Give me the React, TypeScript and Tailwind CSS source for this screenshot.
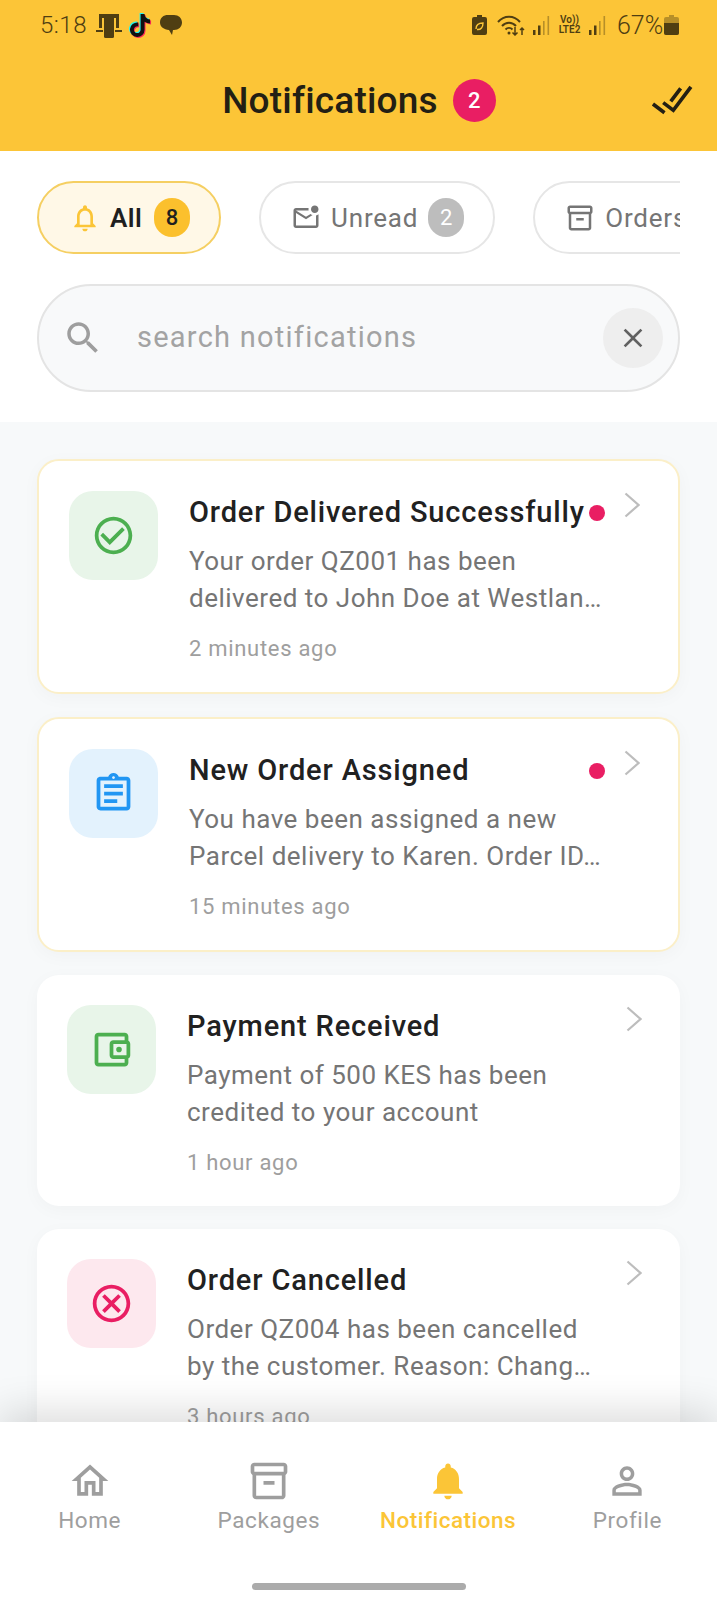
import type { ReactNode } from 'react'
import { FaTiktok } from 'react-icons/fa'

const PATHS = {
  bell: 'M12 22c1.1 0 2-.9 2-2h-4c0 1.1.9 2 2 2zm6-6v-5c0-3.07-1.63-5.64-4.5-6.32V4c0-.83-.67-1.5-1.5-1.5s-1.5.67-1.5 1.5v.68C7.64 5.36 6 7.92 6 11v5l-2 2v1h16v-1l-2-2zm-2 1H8v-6c0-2.48 1.51-4.5 4-4.5s4 2.02 4 4.5v6z',
  bellFilled: 'M12 22c1.1 0 2-.9 2-2h-4c0 1.1.89 2 2 2zm6-6v-5c0-3.07-1.64-5.64-4.5-6.32V4c0-.83-.67-1.5-1.5-1.5s-1.5.67-1.5 1.5v.68C7.63 5.36 6 7.92 6 11v5l-2 2v1h16v-1l-2-2z',
  unread: 'M22 8.98V18c0 1.1-.9 2-2 2H4c-1.1 0-2-.9-2-2V6c0-1.1.9-2 2-2h10.1c-.06.32-.1.66-.1 1s.04.68.1 1H4l8 5 3.67-2.29c.47.43 1.02.76 1.63.98L12 13 4 8v10h16V9.9c.74-.15 1.42-.48 2-.92zM16 5c0 1.66 1.34 3 3 3s3-1.34 3-3-1.34-3-3-3-3 1.34-3 3z',
  box: 'M20 2H4c-1 0-2 .9-2 2v3.01c0 .72.43 1.34 1 1.69V20c0 1.1 1.1 2 2 2h14c.9 0 2-.9 2-2V8.7c.57-.35 1-.97 1-1.69V4c0-1.1-1-2-2-2zm-1 18H5V9h14v11zm1-13H4V4h16v3zM9 12h6v2H9z',
  search: 'M15.5 14h-.79l-.28-.27C15.41 12.59 16 11.11 16 9.5 16 5.91 13.09 3 9.5 3S3 5.91 3 9.5 5.91 16 9.5 16c1.61 0 3.09-.59 4.23-1.57l.27.28v.79l5 4.99L20.49 19l-4.99-5zm-6 0C7.01 14 5 11.99 5 9.5S7.01 5 9.5 5 14 7.01 14 9.5 11.99 14 9.5 14z',
  close: 'M19 6.41L17.59 5 12 10.59 6.41 5 5 6.41 10.59 12 5 17.59 6.41 19 12 13.41 17.59 19 19 17.59 13.41 12z',
  doneAll: 'M18 7l-1.41-1.41-6.34 6.34 1.41 1.41L18 7zm4.24-1.41L11.66 16.17 7.48 12l-1.41 1.41L11.66 19l12-12-1.42-1.41zM.41 13.41L6 19l1.41-1.41L1.83 12 .41 13.41z',
  check: 'M16.59 7.58L10 14.17l-3.59-3.58L5 12l5 5 8-8zM12 2C6.48 2 2 6.48 2 12s4.48 10 10 10 10-4.48 10-10S17.52 2 12 2zm0 18c-4.42 0-8-3.58-8-8s3.58-8 8-8 8 3.58 8 8-3.58 8-8 8z',
  assignment: 'M7 15h7v2H7zm0-4h10v2H7zm0-4h10v2H7zm12-4h-4.18C14.4 1.84 13.3 1 12 1c-1.3 0-2.4.84-2.82 2H5c-.14 0-.27.01-.4.04-.39.08-.74.28-1.01.55-.18.18-.33.4-.43.64-.1.23-.16.49-.16.77v14c0 .27.06.54.16.78s.25.45.43.64c.27.27.62.47 1.01.55.13.02.26.03.4.03h14c1.1 0 2-.9 2-2V5c0-1.1-.9-2-2-2zm-7-.25c.41 0 .75.34.75.75s-.34.75-.75.75-.75-.34-.75-.75.34-.75.75-.75zM19 19H5V5h14v14z',
  wallet: 'M21 7.28V5c0-1.1-.9-2-2-2H5c-1.11 0-2 .9-2 2v14c0 1.1.89 2 2 2h14c1.1 0 2-.9 2-2v-2.28c.59-.35 1-.98 1-1.72V9c0-.74-.41-1.37-1-1.72zM20 9v6h-7V9h7zM5 19V5h14v2h-6c-1.1 0-2 .9-2 2v6c0 1.1.9 2 2 2h6v2H5zM16 10.5a1.5 1.5 0 1 0 0 3 1.5 1.5 0 0 0 0-3z',
  cancel: 'M12 2C6.47 2 2 6.47 2 12s4.47 10 10 10 10-4.47 10-10S17.53 2 12 2zm0 18c-4.41 0-8-3.59-8-8s3.59-8 8-8 8 3.59 8 8-3.59 8-8 8zm3.59-13L12 10.59 8.41 7 7 8.41 10.59 12 7 15.59 8.41 17 12 13.41 15.59 17 17 15.59 13.41 12 17 8.41z',
  home: 'M12 5.69l5 4.5V18h-2v-6H9v6H7v-7.81l5-4.5M12 3L2 12h3v8h6v-6h2v6h6v-8h3L12 3z',
  person: 'M12 5.9c1.16 0 2.1.94 2.1 2.1s-.94 2.1-2.1 2.1S9.9 9.16 9.9 8s.94-2.1 2.1-2.1m0 9c2.97 0 6.1 1.46 6.1 2.1v1.1H5.9V17c0-.64 3.13-2.1 6.1-2.1M12 4C9.79 4 8 5.79 8 8s1.79 4 4 4 4-1.79 4-4-1.79-4-4-4zm0 9c-2.67 0-8 1.34-8 4v3h16v-3c0-2.66-5.33-4-8-4z'
}

function Icon({ d, className }: { d: string; className: string }): JSX.Element {
  return (
    <svg viewBox="0 0 24 24" fill="currentColor" className={className}>
      <path d={d} />
    </svg>
  )
}

function Signal({ className }: { className: string }): JSX.Element {
  return (
    <svg viewBox="0 0 17 19" className={className} fill="currentColor">
      <rect x="0" y="14" width="2.5" height="5" />
      <rect x="5" y="9.5" width="2.5" height="9.5" />
      <rect x="10" y="5" width="1.6" height="14" opacity="0.4" />
      <rect x="14.5" y="0" width="1.6" height="19" opacity="0.4" />
    </svg>
  )
}

function StatusBar(): JSX.Element {
  return (
    <div className="flex h-[50px] items-center justify-between pl-[40px] pr-[38px] text-[#4f3e12]">
      <div className="flex items-center">
        <span className="w-[56px] text-[24px] font-light leading-none tracking-[0.5px]">5:18</span>
        <svg viewBox="0 0 26 25" className="h-[25px] w-[26px]" fill="currentColor">
          <path d="M3 1h20v14h-3V5H6v10H3z" />
          <rect x="8" y="3" width="10" height="22" rx="1.5" />
          <rect x="0" y="17" width="7" height="2" />
          <rect x="19" y="17" width="7" height="2" />
        </svg>
        <FaTiktok className="ml-[7px] h-[23px] w-[22px] text-[#111] [filter:drop-shadow(-1px_-1px_0_#25f4ee)_drop-shadow(1px_1px_0_#fe2c55)]" />
        <svg viewBox="0 0 22 22" className="ml-[9px] h-[22px] w-[22px]" fill="currentColor">
          <path d="M8 1h6c4.5 0 8 3 8 7.5S18.5 16 14 16h-1l-1 5-3-5C4 15.500 0 13 0 8.500 0 3.500 3.500 1 8 1z" />
        </svg>
      </div>
      <div className="flex items-center">
        <svg viewBox="0 0 15 20" className="h-[20px] w-[15px]" fill="currentColor">
          <path d="M5 0h5v2h3a2 2 0 0 1 2 2v14a2 2 0 0 1-2 2H2a2 2 0 0 1-2-2V4a2 2 0 0 1 2-2h3z" />
          <path d="M4 14c0-4 3-6 7-6 0 4-2 7-6 6.500" fill="none" stroke="#fcc537" strokeWidth="1.400" />
        </svg>
        <svg viewBox="0 0 28 21" className="ml-[10px] h-[21px] w-[28px]" fill="none" stroke="currentColor" strokeWidth="2">
          <path d="M1 7c6-7 16-7 22 0M5 11c4-4.500 10-4.500 14 0M8.500 14.500c2-2 5-2 7 0" />
          <circle cx="12" cy="18" r="1.500" fill="currentColor" stroke="none" />
          <path d="M18 12v8M15.500 17.500l2.500 2.500 2.500-2.500M25 20v-7M23 15l2-2 2 2" strokeWidth="1.500" />
        </svg>
        <Signal className="ml-[8px] h-[19px] w-[17px]" />
        <div className="ml-[7px] flex w-[25px] flex-col items-center text-[10px] font-semibold leading-[10px]">
          <span>Vo))</span>
          <span>LTE2</span>
        </div>
        <Signal className="ml-[7px] h-[19px] w-[17px]" />
        <span className="ml-[11px] w-[44px] whitespace-nowrap text-[25px] font-light leading-none">67%</span>
        <svg viewBox="0 0 15 20" className="ml-[3px] h-[20px] w-[15px]" fill="currentColor">
          <path d="M5 0h5v2h3a2 2 0 0 1 2 2v14a2 2 0 0 1-2 2H2a2 2 0 0 1-2-2V4a2 2 0 0 1 2-2h3z" opacity="0.4" />
          <path d="M0 8h15v10a2 2 0 0 1-2 2H2a2 2 0 0 1-2-2z" />
        </svg>
      </div>
    </div>
  )
}

function Chip({
  icon,
  label,
  count,
  active,
  className
}: {
  icon?: ReactNode
  label: string
  count?: string
  active?: boolean
  className: string
}): JSX.Element {
  return (
    <div
      className={[
        'flex h-[73px] shrink-0 items-center rounded-full border-2',
        active ? 'border-[#f5cf62] bg-[#fff8e7]' : 'border-[#e6e6e6] bg-white',
        className
      ].join(' ')}
    >
      {icon}
      <span
        className={[
          'text-[26px] leading-none',
          active ? 'font-semibold tracking-[0.4px] text-[#1f1f1f]' : 'font-[450] tracking-[0.8px] text-[#757575]'
        ].join(' ')}
      >
        {label}
      </span>
      {count && (
        <span
          className={[
            'flex h-[39px] w-[36px] items-center justify-center rounded-full text-[22px]',
            active ? 'ml-[12px] bg-[#fbc02d] font-medium text-[#1f1f1f]' : 'ml-[10px] bg-[#bdbdbd] text-white'
          ].join(' ')}
        >
          {count}
        </span>
      )}
    </div>
  )
}

type Note = {
  icon: string
  iconClass: string
  title: string
  lines: [string, string]
  time: string
  unread?: boolean
}

const NOTES: Note[] = [
  {
    icon: PATHS.check,
    iconClass: 'bg-[#e8f5e9] text-[#4caf50]',
    title: 'Order Delivered Successfully',
    lines: ['Your order QZ001 has been', 'delivered to John Doe at Westlan…'],
    time: '2 minutes ago',
    unread: true
  },
  {
    icon: PATHS.assignment,
    iconClass: 'bg-[#e3f2fd] text-[#2196f3]',
    title: 'New Order Assigned',
    lines: ['You have been assigned a new', 'Parcel delivery to Karen. Order ID…'],
    time: '15 minutes ago',
    unread: true
  },
  {
    icon: PATHS.wallet,
    iconClass: 'bg-[#e8f5e9] text-[#4caf50]',
    title: 'Payment Received',
    lines: ['Payment of 500 KES has been', 'credited to your account'],
    time: '1 hour ago'
  },
  {
    icon: PATHS.cancel,
    iconClass: 'bg-[#fde8ee] text-[#e91e63]',
    title: 'Order Cancelled',
    lines: ['Order QZ004 has been cancelled', 'by the customer. Reason: Chang…'],
    time: '3 hours ago'
  }
]

function NoteCard({ note }: { note: Note }): JSX.Element {
  return (
    <div
      className={[
        'flex shrink-0 rounded-[22px] bg-white px-[30px] pb-[29px] pt-[30px] shadow-[0_4px_18px_rgba(0,0,0,0.03)]',
        note.unread ? 'border-2 border-[#fbefc8]' : ''
      ].join(' ')}
    >
      <div className={`flex h-[89px] w-[89px] shrink-0 items-center justify-center rounded-[24px] ${note.iconClass}`}>
        <Icon d={note.icon} className="h-[45px] w-[45px]" />
      </div>
      <div className="ml-[31px] min-w-0 flex-1">
        <div className="flex h-[43px] items-center">
          <span className="min-w-0 flex-1 whitespace-nowrap text-[29px] font-[550] tracking-[0.85px] text-[#212121]">
            {note.title}
          </span>
          {note.unread && <span className="h-[16px] w-[16px] shrink-0 rounded-full bg-[#e91e63]" />}
        </div>
        <div className="mt-[9px] text-[26px] leading-[37px] tracking-[0.5px] text-[#757575]">
          {note.lines.map((l) => (
            <div key={l} className="whitespace-nowrap">
              {l}
            </div>
          ))}
        </div>
        <div className="mt-[18px] text-[22px] leading-[28px] tracking-[0.7px] text-[#9e9e9e]">{note.time}</div>
      </div>
      <div className="ml-[19px] w-[24px] shrink-0 pt-[1px]">
        <svg viewBox="0 0 16 26" className="h-[26px] w-[16px]" fill="none" stroke="#bdbdbd" strokeWidth="2.200">
          <path d="M1.500 1.500L14.500 13L1.500 24.500" />
        </svg>
      </div>
    </div>
  )
}

function NavItem({ d, label, active, iconClass }: { d: string; label: string; active?: boolean; iconClass: string }): JSX.Element {
  return (
    <div className={`flex flex-1 flex-col items-center ${active ? 'text-[#fbc537]' : 'text-[#9e9e9e]'}`}>
      <Icon d={d} className={iconClass} />
      <span className={`mt-[3px] text-[22.500px] leading-[28px] ${active ? 'font-medium tracking-[0.5px]' : 'font-normal tracking-[0.6px]'}`}>
        {label}
      </span>
    </div>
  )
}

export default function App(): JSX.Element {
  return (
    <div className="flex h-[1600px] w-[717px] flex-col overflow-hidden bg-white font-['Roboto',sans-serif]">
      <header className="h-[151px] shrink-0 bg-[#fcc537]">
        <StatusBar />
        <div className="flex h-[100px] items-center justify-between pl-[68px] pr-[22px]">
          <div className="flex flex-1 items-center justify-center">
            <h1 className="text-[37px] font-medium leading-none tracking-[0.2px] text-[#231f14]">Notifications</h1>
            <span className="ml-[15px] flex h-[43px] w-[43px] items-center justify-center rounded-full bg-[#e91e63] text-[22px] font-medium text-white">
              2
            </span>
          </div>
          <Icon d={PATHS.doneAll} className="h-[44px] w-[45px] -rotate-[8deg] text-[#231f14]" />
        </div>
      </header>

      <section className="h-[271px] shrink-0 bg-white px-[37px] pt-[30px]">
        <div className="flex gap-[38px] overflow-hidden">
          <Chip
            active
            label="All"
            count="8"
            className="pl-[30px] pr-[29px]"
            icon={<Icon d={PATHS.bell} className="mr-[9px] h-[32px] w-[32px] text-[#fbc537]" />}
          />
          <Chip
            label="Unread"
            count="2"
            className="pl-[30px] pr-[29px]"
            icon={<Icon d={PATHS.unread} className="mr-[10px] h-[30px] w-[30px] text-[#757575]" />}
          />
          <Chip
            label="Orders"
            className="pl-[30px] pr-[60px]"
            icon={<Icon d={PATHS.box} className="mr-[10px] h-[30px] w-[30px] text-[#757575]" />}
          />
        </div>
        <div className="mt-[30px] flex h-[108px] items-center rounded-full border-2 border-[#e4e4e4] bg-[#f8f9fa] pl-[23px] pr-[15px]">
          <Icon d={PATHS.search} className="h-[42px] w-[42px] text-[#9e9e9e]" />
          <span className="ml-[33px] flex-1 text-[29px] tracking-[1.25px] text-[#a3a3a3]">search notifications</span>
          <div className="flex h-[60px] w-[60px] items-center justify-center rounded-full bg-[#eeeeee]">
            <Icon d={PATHS.close} className="h-[32px] w-[32px] text-[#616161]" />
          </div>
        </div>
      </section>

      <main className="flex min-h-0 flex-1 flex-col gap-[23px] overflow-hidden bg-[#f7f9fa] px-[37px] pt-[37px]">
        {NOTES.map((n) => (
          <NoteCard key={n.title} note={n} />
        ))}
      </main>

      <nav className="relative z-10 flex h-[178px] shrink-0 flex-col bg-white pt-[37px] shadow-[0_-10px_38px_rgba(0,0,0,0.14)]">
        <div className="flex">
          <NavItem d={PATHS.home} label="Home" iconClass="h-[44px] w-[44px]" />
          <NavItem d={PATHS.box} label="Packages" iconClass="h-[44px] w-[44px]" />
          <NavItem active d={PATHS.bellFilled} label="Notifications" iconClass="h-[44px] w-[44px]" />
          <NavItem d={PATHS.person} label="Profile" iconClass="h-[44px] w-[44px]" />
        </div>
        <div className="mx-auto mt-[49px] h-[7px] w-[214px] rounded-full bg-[#ababab]" />
      </nav>
    </div>
  )
}
